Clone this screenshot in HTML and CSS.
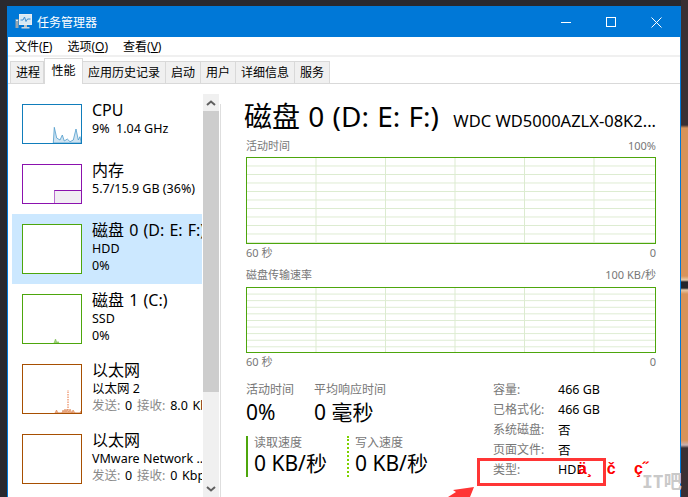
FILE: index.html
```html
<!DOCTYPE html>
<html lang="zh-CN">
<head>
    <meta charset="UTF-8">
    <title>任务管理器</title>
    <link rel="stylesheet" href="styles.css">
</head>
<body>
    <div class="window">
        <div class="titlebar">
            <svg class="app-icon" width="18" height="16" viewBox="0 0 18 16">
                <rect x="0.5" y="5" width="3" height="9" fill="#9aa7b0"/>
                <rect x="1" y="6" width="2" height="1" fill="#e8eef2"/>
                <rect x="4.5" y="0.5" width="12" height="10" fill="#d7e9f5" stroke="#e9eef1"/>
                <path d="M5.5 6 L8 6 L9.5 3 L11 7.5 L12.5 5 L15.5 5" fill="none" stroke="#3f8fd0"/>
                <rect x="9" y="11" width="3" height="2" fill="#b8c2c9"/>
                <rect x="6.5" y="13" width="8" height="1.5" fill="#cfd6db"/>
            </svg>
            <span class="app-title">任务管理器</span>
            <div class="win-btns">
                <svg width="10" height="10" viewBox="0 0 10 10"><path d="M0 5.5H10" stroke="#fff"/></svg>
                <svg width="10" height="10" viewBox="0 0 10 10"><rect x="0.5" y="0.5" width="9" height="9" fill="none" stroke="#fff"/></svg>
                <svg width="11" height="11" viewBox="0 0 11 11"><path d="M0.5 0.5L10.5 10.5M10.5 0.5L0.5 10.5" stroke="#fff"/></svg>
            </div>
        </div>

        <div class="menubar">
            <span>文件(<u>F</u>)</span>
            <span>选项(<u>O</u>)</span>
            <span>查看(<u>V</u>)</span>
        </div>

        <div class="tabs">
            <div class="tab">进程</div>
            <div class="tab active">性能</div>
            <div class="tab">应用历史记录</div>
            <div class="tab">启动</div>
            <div class="tab">用户</div>
            <div class="tab">详细信息</div>
            <div class="tab">服务</div>
        </div>

        <div class="content">
            <div class="sidebar">
                <div class="item">
                    <div class="thumb thumb-cpu short">
                        <svg width="58" height="38" viewBox="0 0 58 38">
                            <polygon points="30.3,38 31.3,22.3 33.7,33 37,35 39.3,30 41.3,36 44.3,34 47,36.7 50.3,35 53,24 55.3,35 57,31.7 58,36.7 58,38" fill="#cfe3f1" stroke="#4f9ccc" stroke-width="0.8"/>
                        </svg>
                    </div>
                    <div class="info">
                        <div class="name">CPU</div>
                        <div class="sub">9%&nbsp; 1.04 GHz</div>
                    </div>
                </div>
                <div class="item">
                    <div class="thumb thumb-mem short">
                        <div class="mem-fill"></div>
                    </div>
                    <div class="info">
                        <div class="name">内存</div>
                        <div class="sub">5.7/15.9 GB (36%)</div>
                    </div>
                </div>
                <div class="item selected">
                    <div class="thumb thumb-disk"></div>
                    <div class="info">
                        <div class="name">磁盘 0 (D: E: F:)</div>
                        <div class="sub">HDD</div>
                        <div class="sub">0%</div>
                    </div>
                </div>
                <div class="item">
                    <div class="thumb thumb-disk">
                        <svg width="58" height="48" viewBox="0 0 58 48">
                            <polygon points="31,48 32.5,44 34,48 35,46.5 36,48" fill="#a9d58a" stroke="#7fbf55" stroke-width="0.6"/>
                        </svg>
                    </div>
                    <div class="info">
                        <div class="name">磁盘 1 (C:)</div>
                        <div class="sub">SSD</div>
                        <div class="sub">0%</div>
                    </div>
                </div>
                <div class="item">
                    <div class="thumb thumb-net">
                        <svg width="58" height="48" viewBox="0 0 58 48">
                            <path d="M45 48V25" stroke="#e8703a" stroke-width="1" stroke-dasharray="1.5 1"/>
                            <polygon points="32,48 33.5,45 35,48 39,48 40,45 41,47 42,44 43,47 44,44 46,47 47,44 49,48 50,45 52,48 57,48 58,46 58,48" fill="#eeb591" stroke="#d98352" stroke-width="0.6"/>
                        </svg>
                    </div>
                    <div class="info">
                        <div class="name">以太网</div>
                        <div class="sub">以太网 2</div>
                        <div class="sub rates"><span class="dim">发送:</span> 0 <span class="dim">接收:</span> 8.0 Kbps</div>
                    </div>
                </div>
                <div class="item">
                    <div class="thumb thumb-net"></div>
                    <div class="info">
                        <div class="name">以太网</div>
                        <div class="sub">VMware Network ...</div>
                        <div class="sub rates"><span class="dim">发送:</span> 0 <span class="dim">接收:</span> 0 Kbps</div>
                    </div>
                </div>
            </div>

            <div class="scrollbar">
                <div class="scroll-btn">
                    <svg width="10" height="6" viewBox="0 0 10 6"><path d="M1 5L5 1.5L9 5" fill="none" stroke="#606060" stroke-width="2"/></svg>
                </div>
                <div class="scroll-thumb"></div>
                <div class="scroll-rest"></div>
                <div class="scroll-btn">
                    <svg width="10" height="6" viewBox="0 0 10 6"><path d="M1 1L5 4.5L9 1" fill="none" stroke="#606060" stroke-width="2"/></svg>
                </div>
            </div>

            <div class="main">
                <div class="head">
                    <h1>磁盘 0 (D: E: F:)</h1>
                    <div class="model">WDC WD5000AZLX-08K2...</div>
                </div>

                <div class="chart-label"><span>活动时间</span><span>100%</span></div>
                <div class="chart chart-tall"></div>
                <div class="chart-label after"><span>60 秒</span><span>0</span></div>

                <div class="chart-label second"><span>磁盘传输速率</span><span>100 KB/秒</span></div>
                <div class="chart chart-low"></div>
                <div class="chart-label after"><span>60 秒</span><span>0</span></div>

                <div class="details">
                    <div class="stats">
                        <div class="stat-row">
                            <div class="stat wide">
                                <div class="stat-label">活动时间</div>
                                <div class="stat-value">0%</div>
                            </div>
                            <div class="stat">
                                <div class="stat-label">平均响应时间</div>
                                <div class="stat-value">0 毫秒</div>
                            </div>
                        </div>
                        <div class="stat-row speeds">
                            <div class="speed read">
                                <div class="stat-label">读取速度</div>
                                <div class="stat-value">0 KB/秒</div>
                            </div>
                            <div class="speed write">
                                <div class="stat-label">写入速度</div>
                                <div class="stat-value">0 KB/秒</div>
                            </div>
                        </div>
                    </div>
                    <div class="props">
                        <span class="prop">容量:</span><span>466 GB</span>
                        <span class="prop">已格式化:</span><span>466 GB</span>
                        <span class="prop">系统磁盘:</span><span>否</span>
                        <span class="prop">页面文件:</span><span>否</span>
                        <span class="prop">类型:</span><span>HDD</span>
                    </div>
                </div>
            </div>
        </div>
    </div>

    <!-- 标注 -->
    <div class="mark-box"></div>
    <div class="mark-text">ä¸ č <span class="mark-last">ç˝</span></div>
    <svg class="mark-arrow" width="30" height="12" viewBox="0 0 30 12">
        <polygon points="1,11 9,6 6,4 27,1 23,11" fill="#ff3535"/>
    </svg>
    <div class="watermark">IT吧</div>
</body>
</html>
```

FILE: styles.css
```css
html, body { margin: 0; height: 100%; }
body {
    height: 497px;
    overflow: hidden;
    position: relative;
    font-family: "Noto Sans", "Noto Sans CJK SC", sans-serif;
    font-size: 13px;
    color: #000;
    background-color: #2a292e;
    background-image: linear-gradient(to bottom, #3a2f33 0, #3a2f33 125px, #d8935a 128px, #d8935a 276px, #e6c9a8 280px, #26252a 282px, #26252a 288px, #e6c9a8 290px, #d8935a 294px, #d8935a 440px, #c9b0b0 445px, #3a2f33 448px);
    background-repeat: no-repeat;
    background-position: right top;
    background-size: 7px 100%;
}

.window {
    width: 674px;
    height: 491px;
    margin: 6px 0 0 7px;
    box-sizing: border-box;
    border: 1px solid #0078d7;
    border-bottom: 0;
    background: #fff;
    overflow: hidden;
    display: flex;
    flex-direction: column;
}

.titlebar {
    height: 30px;
    flex: none;
    background: #0078d7;
    color: #fff;
    display: flex;
    align-items: center;
    padding-left: 7px;
    font-size: 12px;
}
.app-icon { margin-right: 4px; }
.app-title { font-size: 12px; }
.win-btns {
    margin-left: auto;
    display: flex;
    align-items: center;
    gap: 35px;
    padding-right: 18px;
}

.menubar {
    height: 18px;
    flex: none;
    display: flex;
    align-items: center;
    padding-left: 7px;
    font-size: 12px;
    border-bottom: 2px solid #f0f0f0;
}
.menubar span { margin-right: 15px; white-space: nowrap; }

.tabs {
    height: 27px;
    flex: none;
    box-sizing: border-box;
    display: flex;
    align-items: flex-end;
    padding-left: 2px;
    border-bottom: 1px solid #d9d9d9;
}
.tab {
    height: 22px;
    box-sizing: border-box;
    padding: 0 5px;
    font-size: 12px;
    line-height: 21px;
    background: #f0f0f0;
    border: 1px solid #d9d9d9;
    border-bottom: 0;
    border-left-width: 0;
    white-space: nowrap;
}
.tab:first-child { border-left-width: 1px; padding-right: 3px; }
.tab.active {
    height: 26px;
    margin-bottom: -1px;
    padding: 0 6.5px;
    line-height: 24px;
    background: #fff;
    border-left-width: 1px;
}

.content { flex: 1; display: flex; min-height: 0; }

.sidebar {
    width: 190px;
    flex: none;
    margin: 10px 0 0 4px;
}
.item {
    display: flex;
    gap: 10px;
    padding: 10px 0 10px 10px;
    overflow: hidden;
    white-space: nowrap;
}
.item.selected { background: #cce8ff; }
.thumb {
    width: 60px;
    height: 50px;
    flex: none;
    box-sizing: border-box;
    border: 1px solid;
    background: #fff;
    position: relative;
}
.thumb svg { display: block; }
.thumb.short { height: 40px; }
.thumb-cpu { border-color: #117dbb; }
.thumb-mem { border-color: #8b12ae; }
.thumb-disk { border-color: #4da60c; }
.thumb-net { border-color: #a74f01; }
.mem-fill {
    position: absolute;
    left: 31px;
    right: 0;
    bottom: 0;
    height: 12px;
    background: #f1edf3;
    border-top: 1px solid #8b12ae;
    border-left: 1px solid #b86fce;
}
.info { margin-top: -4px; height: 54px; }
.item .thumb.short + .info { height: 44px; }
.name { font-size: 16px; line-height: 20px; word-spacing: 1px; }
.sub { font-size: 12.5px; line-height: 17px; }
.rates { word-spacing: 1.5px; }
.dim { color: #8a8a8a; }

.scrollbar {
    width: 16px;
    flex: none;
    margin: 10px 0 0 1px;
    background: #f0f0f0;
    border-right: 1px solid #fff;
    display: flex;
    flex-direction: column;
}
.scroll-btn {
    height: 17px;
    flex: none;
    display: flex;
    align-items: center;
    justify-content: center;
}
.scroll-thumb { height: 281px; flex: none; background: #cdcdcd; }
.scroll-rest { flex: 1; }

.main {
    flex: 1;
    min-width: 0;
    padding: 16px 24px 0 26px;
    background: linear-gradient(#dedede, #dedede) no-repeat 0 20px / 1px 100%;
}
.head { display: flex; align-items: baseline; justify-content: space-between; height: 32px; margin-left: -2px; white-space: nowrap; }
.head h1 { margin: 0; font-size: 28px; font-weight: 400; line-height: 32px; word-spacing: 1px; }
.model { font-size: 16.5px; }

.chart-label {
    display: flex;
    justify-content: space-between;
    font-size: 11px;
    line-height: 14px;
    color: #777;
    margin-top: 7px;
    margin-bottom: 4px;
}
.chart-label.after { margin-top: 2px; margin-bottom: 0; }
.chart-label.second { margin-top: 8px; margin-bottom: 5px; }

.chart {
    box-sizing: border-box;
    border: 1px solid #4da60c;
    background-image:
        linear-gradient(to right, #dcebd0 1px, transparent 1px),
        linear-gradient(to bottom, #dcebd0 1px, transparent 1px);
    background-size: 69.5px 100%, 100% 10%;
    background-position: 68.5px 0, 0 -1px;
}
.chart-tall { height: 87px; }
.chart-low { height: 66px; background-size: 69.5px 100%, 100% 6.6px; }

.details { display: flex; margin-top: 13px; }
.stats { width: 247px; flex: none; }
.stat-row { display: flex; }
.stat.wide { width: 68px; }
.stat-label { font-size: 12px; line-height: 16px; color: #777; white-space: nowrap; }
.stat-value { font-size: 21px; line-height: 28px; white-space: nowrap; }
.speeds { margin-top: 10px; }
.speed { height: 41px; width: 93px; padding-left: 6px; }
.speed .stat-label { line-height: 14px; }
.speed .stat-value { line-height: 27px; }
.read { border-left: 2px solid #4da60c; }
.write { border-left: 2px dotted #7ed100; }

.props {
    display: grid;
    grid-template-columns: 65px auto;
    grid-auto-rows: 20px;
    align-items: center;
    font-size: 12.5px;
    margin-top: -3px;
}
.prop { font-size: 12px; color: #777; }

.mark-box {
    position: absolute;
    left: 477px;
    top: 458px;
    width: 123px;
    height: 22px;
    border: 3px solid #ff3535;
}
.mark-text {
    position: absolute;
    left: 578px;
    top: 457px;
    font-family: "Liberation Sans", sans-serif;
    font-size: 16px;
    font-weight: 700;
    line-height: 24px;
    color: #f00;
    word-spacing: 10px;
    white-space: nowrap;
}
.mark-last { margin-left: 4px; }
.mark-arrow { position: absolute; left: 447px; top: 486px; }
.watermark {
    position: absolute;
    left: 642px;
    top: 469px;
    font-family: "DejaVu Sans Mono", "Noto Sans CJK SC", monospace;
    font-size: 18px;
    font-weight: 700;
    line-height: 26px;
    color: #c9c9c9;
    white-space: nowrap;
}
```
